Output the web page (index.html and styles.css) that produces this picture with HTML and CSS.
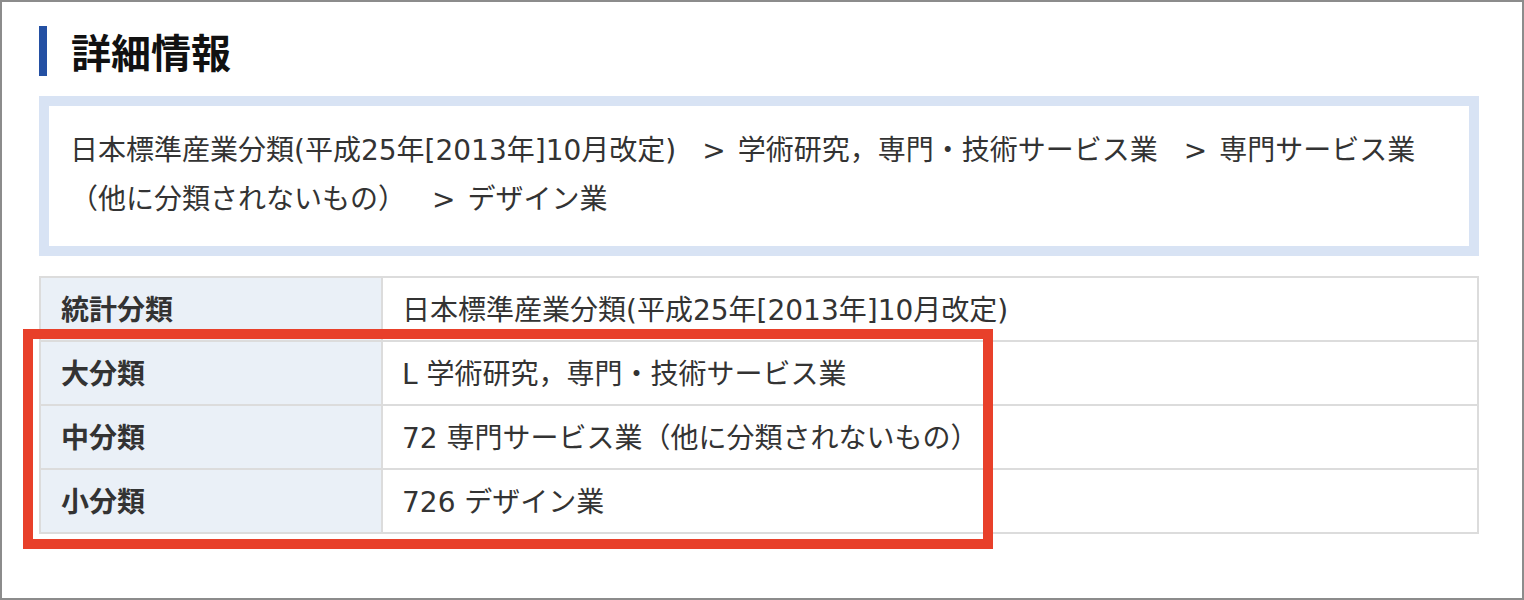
FILE: index.html
```html
<!DOCTYPE html>
<html lang="ja">
<head>
<meta charset="utf-8">
<title>詳細情報</title>
<link rel="stylesheet" href="styles.css">
</head>
<body>
<div class="frame">
  <h2 class="heading">詳細情報</h2>
  <div class="crumbs">
    <span>日本標準産業分類(平成25年[2013年]10月改定)</span><span class="sep">&gt;</span><span>学術研究，専門・技術サービス業</span><span class="sep">&gt;</span><span>専門サービス業（他に分類されないもの）</span><span class="sep">&gt;</span><span>デザイン業</span>
  </div>
  <div class="table-wrap">
    <table class="info">
      <tr><th>統計分類</th><td>日本標準産業分類(平成25年[2013年]10月改定)</td></tr>
      <tr><th>大分類</th><td>L 学術研究，専門・技術サービス業</td></tr>
      <tr><th>中分類</th><td>72 専門サービス業（他に分類されないもの）</td></tr>
      <tr><th>小分類</th><td>726 デザイン業</td></tr>
    </table>
    <div class="highlight"></div>
  </div>
</div>
</body>
</html>
```
FILE: styles.css
```css
* { box-sizing: border-box; }
html, body { margin: 0; padding: 0; background: #fff; }
body {
  font-family: "DejaVu Sans", "Noto Sans CJK JP", sans-serif;
  color: #333;
}
.frame {
  width: 1524px;
  height: 600px;
  border: 2px solid #8c8c8c;
  padding: 24px 0 0 37px;
}
.heading {
  margin: 0;
  height: 50px;
  line-height: 50px;
  border-left: 8px solid #2450a3;
  padding-left: 24px;
  font-family: "Noto Sans CJK JP", sans-serif;
  font-size: 40px;
  font-weight: 700;
  color: #111;
}
.crumbs {
  margin-top: 20px;
  width: 1440px;
  border: 10px solid #d8e3f4;
  padding: 20px 21px 22px;
  font-size: 28px;
  line-height: 49px;
  color: #333;
}
.crumbs .sep {
  padding: 0 12px 0 26px;
}
.table-wrap {
  position: relative;
  margin-top: 20px;
  width: 1440px;
}
.info {
  width: 100%;
  border-collapse: collapse;
  border: 2px solid #dcdcdc;
  font-size: 28px;
}
.info th, .info td {
  border: 2px solid #dcdcdc;
  height: 64px;
  padding: 0 20px 3px;
  text-align: left;
  vertical-align: middle;
}
.info th {
  width: 342px;
  background: #eaf0f7;
  font-family: "Noto Sans CJK JP", sans-serif;
  font-weight: 700;
  color: #333;
}
.info td {
  background: #fff;
  font-weight: 400;
  padding-left: 19px;
}
.highlight {
  position: absolute;
  left: -16px;
  top: 53px;
  width: 970px;
  height: 220px;
  border: 10px solid #e8402a;
}
```
